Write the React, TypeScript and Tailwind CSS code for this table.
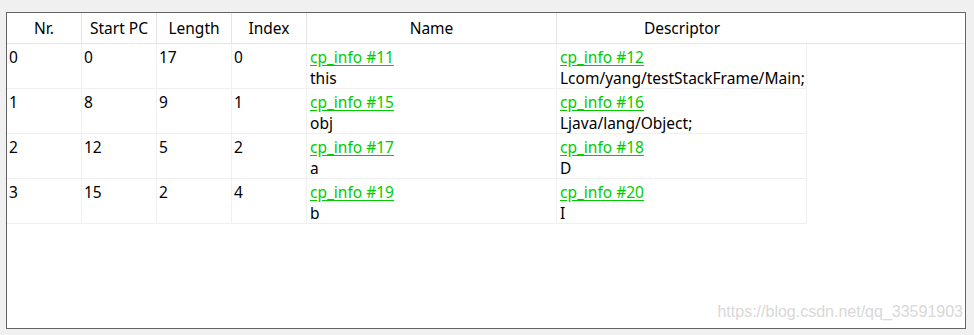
import React from 'react';

type Row = {
  nr: string;
  start: string;
  length: string;
  index: string;
  nameRef: string;
  name: string;
  descRef: string;
  desc: string;
};

const rows: Row[] = [
  { nr: '0', start: '0', length: '17', index: '0', nameRef: 'cp_info #11', name: 'this', descRef: 'cp_info #12', desc: 'Lcom/yang/testStackFrame/Main;' },
  { nr: '1', start: '8', length: '9', index: '1', nameRef: 'cp_info #15', name: 'obj', descRef: 'cp_info #16', desc: 'Ljava/lang/Object;' },
  { nr: '2', start: '12', length: '5', index: '2', nameRef: 'cp_info #17', name: 'a', descRef: 'cp_info #18', desc: 'D' },
  { nr: '3', start: '15', length: '2', index: '4', nameRef: 'cp_info #19', name: 'b', descRef: 'cp_info #20', desc: 'I' },
];

const headers = ['Nr.', 'Start PC', 'Length', 'Index', 'Name', 'Descriptor'];
const cols = 'grid grid-cols-[75px_75px_75px_75px_250px_250px]';

export default function App() {
  return (
    <div className="w-[974px] h-[335px] bg-[#f0f0f0] pt-[12px] pl-[6px] font-['Noto_Sans',sans-serif] text-[15.5px] text-black">
      <div className="relative w-[960px] h-[317px] border border-[#646464] bg-white">
        {/* header */}
        <div className="h-[31px] border-b border-[#e5e5e5]">
          <div className={cols}>
            {headers.map((h, i) => (
              <div
                key={h}
                className={`h-[30px] pt-[2px] flex items-center justify-center leading-none ${i < headers.length - 1 ? 'border-r border-[#e5e5e5]' : ''}`}
              >
                {h}
              </div>
            ))}
          </div>
        </div>

        {/* rows */}
        {rows.map((r) => (
          <div key={r.nr} className={`${cols} w-[800px] h-[45px] border-b border-[#f0f0f0]`}>
            {[r.nr, r.start, r.length, r.index].map((v, i) => (
              <div key={i} className="border-r border-[#f0f0f0] pl-[2px] pt-[3px] leading-[21px]">
                {v}
              </div>
            ))}
            <div className="border-r border-[#f0f0f0] pl-[3px] pt-[3px] leading-[21px]">
              <div className="text-[#00cc00] underline underline-offset-2">{r.nameRef}</div>
              <div>{r.name}</div>
            </div>
            <div className="border-r border-[#f0f0f0] pl-[3px] pt-[3px] leading-[21px] whitespace-nowrap">
              <div className="text-[#00cc00] underline underline-offset-2">{r.descRef}</div>
              <div>{r.desc}</div>
            </div>
          </div>
        ))}

        {/* watermark */}
        <div className="absolute right-[2px] bottom-[4px] font-['Liberation_Sans',sans-serif] text-[16px] text-[#d8d8d8] [text-shadow:0_0_1px_#fff]">
          https://blog.csdn.net/qq_33591903
        </div>
      </div>
    </div>
  );
}
